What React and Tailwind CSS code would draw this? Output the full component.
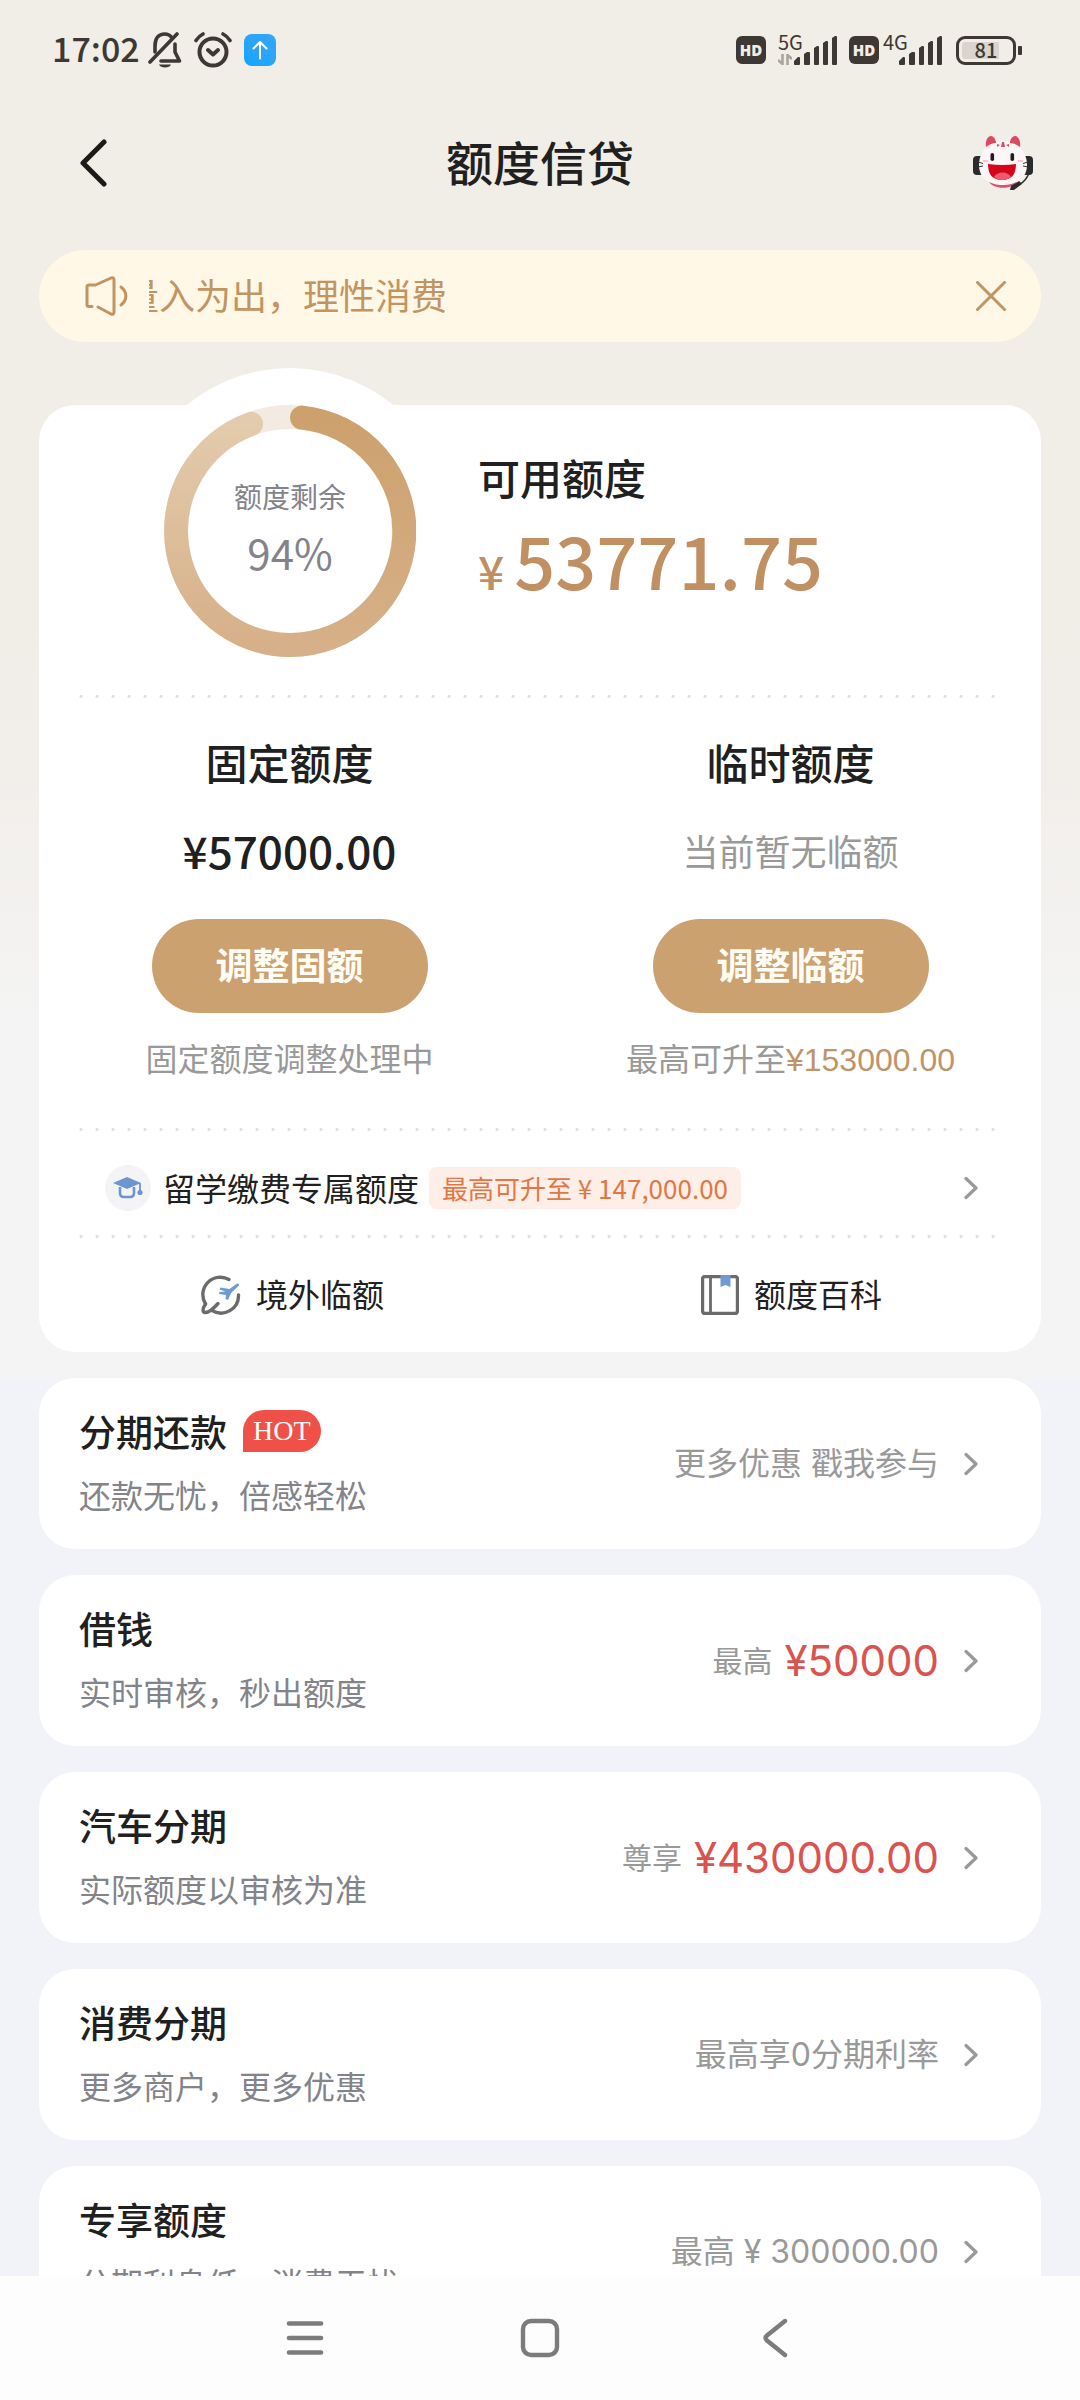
const products = [
  { title: '分期还款', hot: true, desc: '还款无忧，倍感轻松', note: '更多优惠 戳我参与' },
  { title: '借钱', desc: '实时审核，秒出额度', label: '最高', amount: '¥50000' },
  { title: '汽车分期', desc: '实际额度以审核为准', label: '尊享', amount: '¥430000.00' },
  { title: '消费分期', desc: '更多商户，更多优惠', note: '最高享0分期利率' },
  { title: '专享额度', desc: '分期利息低，消费无忧', note: '最高 ¥ 300000.00' },
]

function SignalBars() {
  return (
    <svg width="44" height="29" viewBox="0 0 44 29" fill="#3d3833" aria-hidden="true">
      <path d="M0 28v-3l4-4h1q1 0 1 1v6q0 1-1 1H1q-1 0-1-1z" />
      <path d="M10 28V18l3-2h2q1 0 1 1v11q0 1-1 1h-4q-1 0-1-1z" />
      <path d="M20 28V12l3-2h1q1 0 1 1v17q0 1-1 1h-3q-1 0-1-1z" />
      <path d="M29 28V7l3-2h1q1 0 1 1v22q0 1-1 1h-3q-1 0-1-1z" />
      <path d="M38 28V2l3-2h1q1 0 1 1v27q0 1-1 1h-3q-1 0-1-1z" />
    </svg>
  )
}

function HdBadge() {
  return (
    <span className="flex h-7 w-[30px] items-center justify-center rounded-md bg-[#3d3833] font-['Open_Sans',sans-serif] text-[15px] font-extrabold text-[#f1ede7]">
      HD
    </span>
  )
}

function StatusBar() {
  return (
    <div className="flex h-[100px] shrink-0 items-center justify-between pr-[58px] pl-[52px] text-[#3d3833]">
      <div className="flex items-center">
        <span className="mr-2 pb-1 text-[34px] leading-[52px] font-medium">17:02</span>
        {/* Muted bell */}
        <svg className="mr-3" width="34" height="36" viewBox="0 0 34 36" fill="none" stroke="#3d3833" strokeWidth="3.6" strokeLinecap="round" strokeLinejoin="round">
          <path d="M7 20V14C7 6 11 2 16.5 2c3.500 0 6 1.500 7.500 4" />
          <path d="M27 12v8l4.500 9H13" />
          <path d="M2 30L29 2" />
          <path d="M11 32.500h12c-1 4-11 4-12 0z" fill="#3d3833" stroke="none" />
        </svg>
        {/* Alarm */}
        <svg className="mr-3" width="38" height="36" viewBox="0 0 38 36" fill="none" stroke="#3d3833" strokeWidth="4" strokeLinecap="round" strokeLinejoin="round">
          <circle cx="19" cy="20" r="13.500" />
          <path d="M14 18l5 4.500 5-4.500" />
          <path d="M2 8.500q3-4.500 7-6.500M36 8.500q-3-4.500-7-6.500" strokeWidth="3.600" />
        </svg>
        <span className="flex h-8 w-8 items-center justify-center rounded-lg bg-gradient-to-tr from-[#0ea5ff] to-[#38a5f8]">
          <svg width="16" height="20" viewBox="0 0 16 20" fill="none" stroke="#fff" strokeWidth="2" strokeLinecap="round" strokeLinejoin="round">
            <path d="M8 18.500V2M1.500 8.500L8 2l6.500 6.500" />
          </svg>
        </span>
      </div>

      <div className="flex items-center">
        <HdBadge />
        <div className="relative ml-7">
          <span className="absolute -top-1 -left-4 text-[20px] leading-5">5G</span>
          <svg className="absolute bottom-0 -left-4" width="14" height="11" viewBox="0 0 14 11" fill="none" stroke="#aaa59f" strokeWidth="2.600">
            <path d="M4.500 0v10L0 6M9.500 11V1L14 5" />
          </svg>
          <SignalBars />
        </div>
        <div className="ml-[11px]"><HdBadge /></div>
        <div className="relative ml-5">
          <span className="absolute -top-1 -left-4 text-[20px] leading-5">4G</span>
          <SignalBars />
        </div>
        <div className="ml-[13px] flex items-center">
          <div className="flex h-[29px] w-[60px] items-center justify-center rounded-[9px] border-3 border-[#3d3833] bg-gradient-to-r from-[#d8d4ce] from-75% to-transparent to-75% bg-clip-content p-[3px] text-[20px] leading-5 font-medium">
            81
          </div>
          <div className="ml-0.5 h-[9px] w-1 rounded-[1px] bg-[#3d3833]" />
        </div>
      </div>
    </div>
  )
}

function CatAvatar() {
  return (
    <svg width="60" height="54" viewBox="0 0 60 54" fill="none">
      <rect x="0" y="20" width="11" height="19" rx="4" fill="#2b2b2b" />
      <rect x="49" y="20" width="11" height="19" rx="4" fill="#2b2b2b" />
      <path d="M16 45h28c-2 9-26 9-28 0z" fill="#d9536a" />
      <path d="M30 5c15 0 24 11 24 24 0 12-9 20-24 20S6 41 6 29C6 16 15 5 30 5z" fill="#fdf6f6" />
      {/* ears */}
      <path d="M13 11C12 4 15 0 18 0c3 0 5 4 5 7-4 0-7 2-10 4z" fill="#dc4a60" />
      <path d="M47 11c1-7-2-11-5-11-3 0-5 4-5 7 4 0 7 2 10 4z" fill="#dc4a60" />
      <path d="M29 6h2l1 5h-4zM24 8l3 1-3 2zM36 8l-3 1 3 2z" fill="#c9546a" />
      <rect x="17.500" y="17" width="3.600" height="8" rx="1.800" fill="#1d1d1d" />
      <rect x="37.500" y="17" width="3.600" height="8" rx="1.800" fill="#1d1d1d" />
      <path d="M10 25h5M45 25h5" stroke="#f9c3c9" strokeWidth="2" />
      <path d="M5 26l5 1.500M5 31l5-1M55 26l-5 1.500M55 31l-5-1" stroke="#333" strokeWidth="1" />
      <path d="M15 28q15 2 28 0c0 11-5 16-14 16s-14-5-14-16z" fill="#d5061c" />
      <path d="M21 41c3-6 14-6 17 0-4 4-13 4-17 0z" fill="#ee5a6c" />
      <path d="M56 37q-3 8-9 11" stroke="#2b2b2b" strokeWidth="1.500" />
      <path d="M38 50l8-5 3 3-8 6h-4z" fill="#2b2b2b" />
    </svg>
  )
}

function Notice() {
  return (
    <div className="mx-[39px] mt-6 flex h-[92px] shrink-0 items-center rounded-full bg-[#fff8e6] pr-[35px] pl-[46px] text-[#c19461]">
      <svg className="shrink-0" width="44" height="40" viewBox="0 0 44 40" fill="none" stroke="currentColor" strokeWidth="3" strokeLinecap="round" strokeLinejoin="round">
        <path d="M7 30.500H4Q2 30.500 2 28.500V11Q2 9 4 9h6.500L26 2q3-1 3 2v32q0 3-3 2L13 31" />
        <path d="M36 11c6.500 5 6.500 13 0 18" />
      </svg>
      {/* marquee text, caught part-way past the left edge */}
      <div className="ml-5 flex-1 overflow-hidden pb-1">
        <p className="-ml-[26px] text-[36px] leading-[52px] whitespace-nowrap">量入为出，理性消费</p>
      </div>
      <button aria-label="关闭">
        <svg width="30" height="30" viewBox="0 0 30 30" stroke="currentColor" strokeWidth="3" strokeLinecap="round">
          <path d="M1.500 1.500l27 27M28.500 1.500l-27 27" />
        </svg>
      </button>
    </div>
  )
}

function QuotaRing() {
  return (
    <div className="relative h-[252px] w-[252px] shrink-0">
      <div className="absolute -inset-[37px] rounded-full bg-white" />
      <svg className="absolute inset-0" width="252" height="252" viewBox="0 0 252 252" fill="none">
        <defs>
          <linearGradient id="ringRight" x1="0" y1="0" x2="0" y2="1">
            <stop offset="0" stopColor="#cda16d" />
            <stop offset="1" stopColor="#d6b088" />
          </linearGradient>
          <linearGradient id="ringLeft" x1="0" y1="0" x2="0" y2="1">
            <stop offset="0" stopColor="#e3cbad" />
            <stop offset="1" stopColor="#d6b088" />
          </linearGradient>
        </defs>
        <circle cx="126" cy="126" r="114" stroke="#f3eae1" strokeWidth="24" />
        <path d="M126 240A114 114 0 0 1 87 18.900" stroke="url(#ringLeft)" strokeWidth="24" strokeLinecap="round" />
        <path d="M138 12.600A114 114 0 0 1 126 240" stroke="url(#ringRight)" strokeWidth="24" strokeLinecap="round" />
      </svg>
      <div className="relative flex h-full flex-col items-center justify-center pb-1.5 text-[#83838c]">
        <p className="text-[28px] leading-[44px]">额度剩余</p>
        <p className="mt-1 text-[42px] leading-[60px]">94%</p>
      </div>
    </div>
  )
}

function Dots() {
  return (
    <div className="mx-10 h-[3px] bg-[radial-gradient(circle,#dfdfdf_1px,transparent_2px)] bg-[size:16px_3px] bg-[position:-6px_0px]" />
  )
}

function Chevron() {
  return (
    <svg className="shrink-0" width="14" height="24" viewBox="0 0 14 24" fill="none" stroke="#999" strokeWidth="3.200" strokeLinecap="round" strokeLinejoin="round">
      <path d="M2 2.500L12 12 2 21.500" />
    </svg>
  )
}

function QuotaColumn({ title, value, button, children }) {
  return (
    <div className="flex flex-col items-center">
      <h2 className="text-[42px] leading-[56px] font-medium">{title}</h2>
      <div className="mt-8 flex leading-[56px]">{value}</div>
      <button className="mt-[41px] h-[94px] w-[276px] rounded-full bg-[#cba16f] pb-0.5 text-[37px] font-bold text-[#fffcf3]">
        {button}
      </button>
      <p className="mt-[22px] flex items-baseline text-[32px] leading-[44px] text-[#999]">{children}</p>
    </div>
  )
}

function QuotaCard() {
  return (
    <section className="mx-[39px] mt-[63px] shrink-0 rounded-[36px] bg-white">
      <div className="flex gap-[62px] pb-[38px] pl-[125px]">
        <QuotaRing />
        <div className="relative pt-11">
          <h2 className="text-[42px] leading-[56px] font-medium">可用额度</h2>
          <p className="flex items-baseline gap-2.5 text-[#c09063]">
            <span className="text-[46px] leading-[88px] font-medium">¥</span>
            <span className="text-[72px] leading-[108px] font-medium">53771.75</span>
          </p>
        </div>
      </div>

      <Dots />

      <div className="grid grid-cols-2 pt-9 pb-[46px]">
        <QuotaColumn
          title="固定额度"
          value={<span className="text-[44px] font-medium">¥57000.00</span>}
          button="调整固额"
        >
          固定额度调整处理中
        </QuotaColumn>
        <QuotaColumn
          title="临时额度"
          value={<span className="text-[36px] text-[#999]">当前暂无临额</span>}
          button="调整临额"
        >
          最高可升至
          <span className="font-['Liberation_Sans',sans-serif] text-[#c09468]">¥153000.00</span>
        </QuotaColumn>
      </div>

      <Dots />

      <a href="#study" className="flex h-[104px] items-center pt-2.5 pr-[63px] pl-[66px]">
        <span className="flex h-[46px] w-[46px] items-center justify-center rounded-full bg-[#f4f4f6]">
          <svg width="30" height="24" viewBox="0 0 30 24" fill="none">
            <path d="M14 1l14 6-14 6L0 7z" fill="#6b96cf" />
            <path d="M7 11v6q0 4 4 4h6q4 0 4-4v-6" stroke="#6b96cf" strokeWidth="2.600" />
            <path d="M27 7v9" stroke="#6b96cf" strokeWidth="1.800" />
            <circle cx="27" cy="16.500" r="2.600" fill="#6b96cf" />
          </svg>
        </span>
        <span className="ml-3 pb-0.5 text-[32px] leading-[44px]">留学缴费专属额度</span>
        <span className="mr-auto ml-2.5 rounded-lg bg-[#fdeee7] px-[13px] text-[26px] leading-[42px] text-[#df7845]">
          最高可升至 ¥ 147,000.00
        </span>
        <Chevron />
      </a>

      <Dots />

      <div className="grid h-[114px] grid-cols-2 pl-1 text-[32px] leading-[44px]">
        <a href="#overseas" className="flex items-center justify-center gap-[15px]">
          <svg width="40" height="40" viewBox="0 0 40 40" fill="none" strokeLinecap="round" strokeLinejoin="round">
            <path d="M28 4.500A17.500 17.500 0 0 0 4.500 29M37.500 20A17.500 17.500 0 0 1 11 35.500" stroke="#6b6b6b" strokeWidth="3.400" />
            <path d="M4.500 29c-3.500 5-3 8.500 0 8.500 3.500 0 8-4 12.500-9" stroke="#6b6b6b" strokeWidth="3.400" />
            <path d="M36 8.500q3 0 1.500 2.500L30 18l-3 7-2.500-1 .5-4-7-1 .5-2 6-.5-6-2 1-2 9 1.500z" fill="#6f9bd3" />
          </svg>
          <span className="pb-1">境外临额</span>
        </a>
        <a href="#wiki" className="flex items-center justify-center gap-[15px]">
          <svg width="38" height="40" viewBox="0 0 38 40" fill="none">
            <rect x="1.500" y="1.500" width="35" height="37" rx="2.500" stroke="#6b6b6b" strokeWidth="3.400" />
            <path d="M9.500 2v36" stroke="#6b6b6b" strokeWidth="2.800" />
            <path d="M19.500 0h10v12l-5-2-5 2z" fill="#6f9bd3" />
          </svg>
          <span className="pb-1">额度百科</span>
        </a>
      </div>
    </section>
  )
}

function ProductCard({ title, hot, desc, note, label, amount }) {
  return (
    <a href="#product" className="flex shrink-0 items-center rounded-[36px] bg-white pr-[63px] pl-10">
      <div className="flex-1 pt-7 pb-[33px]">
        <div className="flex items-center">
          <h3 className="text-[37px] leading-[50px] font-medium">{title}</h3>
          {hot && (
            <span className="ml-4 rounded-full rounded-bl-none bg-[#ef5149] px-2.5 font-['Liberation_Serif',serif] text-[28px] leading-[42px] text-white">
              HOT
            </span>
          )}
        </div>
        <p className="mt-4 text-[32px] leading-[44px] text-[#83838a]">{desc}</p>
      </div>
      <div className="mr-[25px] flex items-center gap-3 font-['Inter','Noto_Sans_CJK_SC',sans-serif] text-[#999]">
        {note && <span className="text-[32px] leading-[44px]">{note}</span>}
        {label && <span className="text-[30px] leading-[44px]">{label}</span>}
        {amount && <span className="text-[42px] leading-[56px] text-[#d9534f]">{amount}</span>}
      </div>
      <Chevron />
    </a>
  )
}

function NavBar() {
  return (
    <nav className="flex h-[124px] shrink-0 items-center justify-center gap-[155px] bg-[#fdfdfd]">
      <button aria-label="菜单" className="flex h-20 w-20 items-center justify-center">
        <svg width="38" height="36" viewBox="0 0 38 36" stroke="#7c7c7c" strokeWidth="4.600" strokeLinecap="round">
          <path d="M3 3.500h32M3 18h32M3 32.500h32" />
        </svg>
      </button>
      <button aria-label="主页" className="flex h-20 w-20 items-center justify-center">
        <svg width="40" height="40" viewBox="0 0 40 40" fill="none" stroke="#7c7c7c" strokeWidth="4.400">
          <rect x="3" y="3" width="34" height="34" rx="8" />
        </svg>
      </button>
      <button aria-label="返回" className="flex h-20 w-20 items-center justify-center">
        <svg width="26" height="40" viewBox="0 0 26 40" fill="none" stroke="#7c7c7c" strokeWidth="4.400" strokeLinecap="round" strokeLinejoin="round">
          <path d="M23 3L5 17.500Q2 20 5 22.500L23 37" />
        </svg>
      </button>
    </nav>
  )
}

export default function App() {
  return (
    <div className="flex h-screen flex-col bg-[#f2f3f8] font-['Noto_Sans_CJK_SC',sans-serif] text-[#202020]">
      <main className="min-h-0 flex-1 overflow-y-auto [scrollbar-width:none]">
        <div className="flex flex-col bg-gradient-to-b from-[#f1ede7] from-45% via-[#f2eeea] via-55% to-[#f4f4f4] to-75% pb-[26px]">
          <StatusBar />
          <header className="flex h-[126px] shrink-0 items-center justify-between pr-[47px] pl-[79px]">
            <button aria-label="返回" className="w-[60px]">
              <svg width="28" height="48" viewBox="0 0 28 48" fill="none" stroke="#1c1a17" strokeWidth="5" strokeLinecap="round" strokeLinejoin="round">
                <path d="M25 3L4 24l21 21" />
              </svg>
            </button>
            <h1 className="mr-8 pb-1 text-[47px] leading-[64px] font-medium">额度信贷</h1>
            <button aria-label="客服"><CatAvatar /></button>
          </header>
          <Notice />
          <QuotaCard />
        </div>
        <div className="flex flex-col gap-[26px] px-[39px]">
          {products.map(p => <ProductCard key={p.title} {...p} />)}
        </div>
      </main>
      <NavBar />
    </div>
  )
}
